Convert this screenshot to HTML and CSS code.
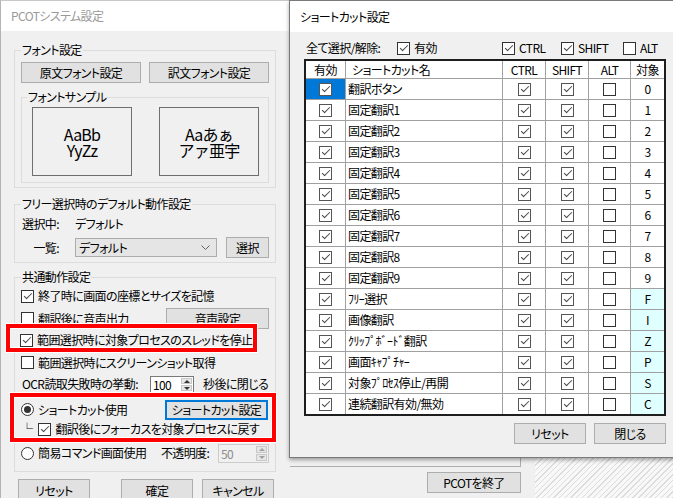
FILE: index.html
```html
<!DOCTYPE html>
<html lang="ja">
<head>
    <meta charset="UTF-8">
    <meta name="viewport" content="width=device-width, initial-scale=1.0">
    <title>PCOTシステム設定</title>
    <link rel="stylesheet" href="styles.css">
</head>

<body>
<div class="desktop">

    <!-- メイン画面（背面） -->
    <div class="win win-main">
        <div class="main-panel"></div>
        <div class="main-foot">
            <button class="btn btn-quit">PCOTを終了</button>
        </div>
    </div>

    <!-- システム設定 -->
    <div class="win win-sys">
        <div class="titlebar">PCOTシステム設定</div>
        <div class="sys-body">
            <fieldset class="group">
                <legend>フォント設定</legend>
                <div class="font-btns">
                    <button class="btn">原文フォント設定</button>
                    <button class="btn">訳文フォント設定</button>
                </div>
                <fieldset class="group group-sample">
                    <legend>フォントサンプル</legend>
                    <div class="samples">
                        <div class="sample">AaBb<br>YyZz</div>
                        <div class="sample">Aaあぁ<br>アァ亜宇</div>
                    </div>
                </fieldset>
            </fieldset>

            <fieldset class="group group-free">
                <legend>フリー選択時のデフォルト動作設定</legend>
                <div class="free-grid">
                    <span class="lbl">選択中:</span>
                    <span>デフォルト</span>
                    <span></span>
                    <span class="lbl">一覧:</span>
                    <div class="combo">
                        <span>デフォルト</span>
                        <svg width="9" height="5" viewBox="0 0 9 5"><polyline points="0.5,0.5 4.5,4.5 8.5,0.5" fill="none" stroke="#606060" stroke-width="1"/></svg>
                    </div>
                    <button class="btn">選択</button>
                </div>
            </fieldset>

            <fieldset class="group group-common">
                <legend>共通動作設定</legend>
                <div class="opt row-a"><span class="chk on"></span>終了時に画面の座標とサイズを記憶</div>
                <div class="opt row-b"><span class="chk"></span>翻訳後に音声出力<button class="btn btn-right">音声設定</button></div>
                <div class="mark mark-thread">
                    <div class="opt"><span class="chk on"></span>範囲選択時に対象プロセスのスレッドを停止</div>
                </div>
                <div class="opt row-d"><span class="chk"></span>範囲選択時にスクリーンショット取得</div>
                <div class="opt row-e">
                    <span class="ocr-lbl">OCR読取失敗時の挙動:</span>
                    <span class="spin"><span class="spin-val">100</span><span class="spin-arrows"><i class="up"></i><i class="down"></i></span></span>
                    <span class="ocr-unit">秒後に閉じる</span>
                </div>
                <div class="mark mark-shortcut">
                    <div class="opt row-f"><span class="radio on"></span>ショートカット使用<button class="btn btn-right btn-focus">ショートカット設定</button></div>
                    <div class="opt row-g"><span class="branch">└</span><span class="chk on"></span>翻訳後にフォーカスを対象プロセスに戻す</div>
                </div>
                <div class="opt row-h">
                    <span class="radio"></span>
                    <span class="cmd-lbl">簡易コマンド画面使用</span>
                    <span class="opacity-lbl">不透明度:</span>
                    <span class="spin spin-off"><span class="spin-val">50</span><span class="spin-arrows"><i class="up"></i><i class="down"></i></span></span>
                </div>
            </fieldset>

            <div class="sys-foot">
                <button class="btn">リセット</button>
                <button class="btn btn-ok">確定</button>
                <button class="btn btn-cancel">キャンセル</button>
            </div>
        </div>
    </div>

    <!-- ショートカット設定 -->
    <div class="win win-keys">
        <div class="titlebar">ショートカット設定</div>
        <div class="keys-body">
            <div class="select-all">
                <span>全て選択/解除:</span>
                <span class="opt"><span class="chk on"></span>有効</span>
                <span class="opt"><span class="chk on"></span>CTRL</span>
                <span class="opt"><span class="chk on"></span>SHIFT</span>
                <span class="opt"><span class="chk"></span>ALT</span>
            </div>

            <div class="keys-grid">
                <div class="hd">有効</div><div class="hd hd-name">ショートカット名</div><div class="hd">CTRL</div><div class="hd">SHIFT</div><div class="hd">ALT</div><div class="hd">対象</div>

                <div class="sel"><span class="chk on"></span></div><div class="name">翻訳ボタン</div><div><span class="chk on"></span></div><div><span class="chk on"></span></div><div><span class="chk"></span></div><div>0</div>
                <div><span class="chk on"></span></div><div class="name">固定翻訳1</div><div><span class="chk on"></span></div><div><span class="chk on"></span></div><div><span class="chk"></span></div><div>1</div>
                <div><span class="chk on"></span></div><div class="name">固定翻訳2</div><div><span class="chk on"></span></div><div><span class="chk on"></span></div><div><span class="chk"></span></div><div>2</div>
                <div><span class="chk on"></span></div><div class="name">固定翻訳3</div><div><span class="chk on"></span></div><div><span class="chk on"></span></div><div><span class="chk"></span></div><div>3</div>
                <div><span class="chk on"></span></div><div class="name">固定翻訳4</div><div><span class="chk on"></span></div><div><span class="chk on"></span></div><div><span class="chk"></span></div><div>4</div>
                <div><span class="chk on"></span></div><div class="name">固定翻訳5</div><div><span class="chk on"></span></div><div><span class="chk on"></span></div><div><span class="chk"></span></div><div>5</div>
                <div><span class="chk on"></span></div><div class="name">固定翻訳6</div><div><span class="chk on"></span></div><div><span class="chk on"></span></div><div><span class="chk"></span></div><div>6</div>
                <div><span class="chk on"></span></div><div class="name">固定翻訳7</div><div><span class="chk on"></span></div><div><span class="chk on"></span></div><div><span class="chk"></span></div><div>7</div>
                <div><span class="chk on"></span></div><div class="name">固定翻訳8</div><div><span class="chk on"></span></div><div><span class="chk on"></span></div><div><span class="chk"></span></div><div>8</div>
                <div><span class="chk on"></span></div><div class="name">固定翻訳9</div><div><span class="chk on"></span></div><div><span class="chk on"></span></div><div><span class="chk"></span></div><div>9</div>
                <div><span class="chk on"></span></div><div class="name">ﾌﾘｰ選択</div><div><span class="chk on"></span></div><div><span class="chk on"></span></div><div><span class="chk"></span></div><div class="key">F</div>
                <div><span class="chk on"></span></div><div class="name">画像翻訳</div><div><span class="chk on"></span></div><div><span class="chk on"></span></div><div><span class="chk"></span></div><div class="key">I</div>
                <div><span class="chk on"></span></div><div class="name">ｸﾘｯﾌﾟﾎﾞｰﾄﾞ翻訳</div><div><span class="chk on"></span></div><div><span class="chk on"></span></div><div><span class="chk"></span></div><div class="key">Z</div>
                <div><span class="chk on"></span></div><div class="name">画面ｷｬﾌﾟﾁｬｰ</div><div><span class="chk on"></span></div><div><span class="chk on"></span></div><div><span class="chk"></span></div><div class="key">P</div>
                <div><span class="chk on"></span></div><div class="name">対象ﾌﾟﾛｾｽ停止/再開</div><div><span class="chk on"></span></div><div><span class="chk on"></span></div><div><span class="chk"></span></div><div class="key">S</div>
                <div><span class="chk on"></span></div><div class="name">連続翻訳有効/無効</div><div><span class="chk on"></span></div><div><span class="chk on"></span></div><div><span class="chk"></span></div><div class="key">C</div>
            </div>

            <div class="keys-foot">
                <button class="btn">リセット</button>
                <button class="btn">閉じる</button>
            </div>
        </div>
    </div>

</div>
</body>
</html>
```

FILE: styles.css
```css
* {
    box-sizing: border-box;
}

body {
    margin: 0;
    font-family: "Noto Sans CJK JP", "Noto Sans", sans-serif;
    font-size: 12px;
    line-height: 16px;
    letter-spacing: -0.6px;
    font-feature-settings: "palt";
    white-space: nowrap;
    color: #000;
}

.desktop {
    position: relative;
    width: 673px;
    height: 498px;
    overflow: hidden;
    background: repeating-linear-gradient(135deg, #f8f8f8 0 3px, #dcdcdc 3px 4px);
}

/* ---- windows ---- */

.win {
    position: absolute;
    top: 0;
    display: flex;
    flex-direction: column;
    background: #f0f0f0;
}

.win-main {
    left: 250px;
    width: 285px;
    height: 498px;
}

.win-sys {
    left: 0;
    width: 290px;
    height: 520px;
    border-left: 1px solid #b4b4b4;
    border-top: 1px solid #c8c8c8;
}

.win-keys {
    left: 289px;
    width: 392px;
    height: 458px;
    border: 1px solid #7a7a7a;
    box-shadow: 0 2px 4px rgba(0, 0, 0, 0.35);
}

.titlebar {
    flex: none;
    display: flex;
    align-items: center;
    height: 31px;
    padding: 1px 0 0 10px;
    background: #fff;
}

.win-sys .titlebar {
    height: 30px;
    padding-top: 0;
    color: #999;
}

/* ---- controls ---- */

.btn {
    font: inherit;
    letter-spacing: inherit;
    line-height: 16px;
    height: 21px;
    padding: 0;
    color: #000;
    background: #e1e1e1;
    border: 1px solid #adadad;
}

.btn-focus {
    border: 2px solid #0078d7;
}

.chk {
    position: relative;
    flex: none;
    display: inline-block;
    width: 13px;
    height: 13px;
    background: #fff;
    border: 1px solid #333;
}

.chk.on::after {
    content: "";
    position: absolute;
    left: 4px;
    top: 0;
    width: 3px;
    height: 7px;
    border: solid #444;
    border-width: 0 1px 1px 0;
    transform: rotate(45deg);
}

.radio {
    position: relative;
    flex: none;
    width: 13px;
    height: 13px;
    background: #fff;
    border: 1px solid #333;
    border-radius: 50%;
}

.radio.on::after {
    content: "";
    position: absolute;
    left: 2px;
    top: 2px;
    width: 7px;
    height: 7px;
    border-radius: 50%;
    background: #333;
}

.opt {
    display: flex;
    align-items: center;
    gap: 4px;
}

.spin {
    display: flex;
    flex: none;
    width: 44px;
    height: 17px;
    background: #fff;
    border: 1px solid #7a7a7a;
}

.spin-val {
    flex: 1;
    padding-left: 2px;
    line-height: 15px;
}

.spin-arrows {
    display: flex;
    flex-direction: column;
    gap: 1px;
    width: 13px;
    padding: 1px;
}

.spin-arrows i {
    position: relative;
    flex: 1;
    background: #e6e6e6;
    border: 1px solid #c8c8c8;
}

.spin-arrows i::after {
    content: "";
    position: absolute;
    left: 2px;
    top: 1px;
    border-left: 3px solid transparent;
    border-right: 3px solid transparent;
}

.spin-arrows .up::after {
    border-bottom: 3px solid #333;
}

.spin-arrows .down::after {
    border-top: 3px solid #333;
}

.spin-off {
    width: 51px;
    height: 19px;
    background: #f0f0f0;
    border-color: #cccccc;
    color: #8c8c8c;
}

.spin-off .spin-val {
    line-height: 17px;
}

.spin-off .spin-arrows i::after {
    border-bottom-color: #a0a0a0;
    border-top-color: #a0a0a0;
}

/* ---- システム設定 ---- */

.sys-body {
    padding: 11px 14px 0 13px;
}

.group {
    margin: 0;
    min-width: 0;
    padding: 0 6px 4px;
    border: 1px solid #dcdcdc;
}

.group legend {
    padding: 0 1px;
}

.font-btns {
    display: flex;
    gap: 8px;
    margin-top: 4px;
}

.font-btns .btn {
    width: 120px;
}

.group-sample {
    margin-top: 6px;
    padding: 0 9px 6px 10px;
}

.group-sample legend {
    margin-left: -5px;
}

.samples {
    display: flex;
    gap: 27px;
    margin-top: 2px;
}

.sample {
    display: flex;
    align-items: center;
    justify-content: center;
    width: 100px;
    height: 69px;
    border: 1px solid #6e6e6e;
    font-size: 16px;
    line-height: 16px;
    letter-spacing: -0.8px;
    font-feature-settings: normal;
    text-align: center;
}

.group-free {
    margin-top: 8px;
}

.free-grid {
    display: grid;
    grid-template-columns: 54px 151px 43px;
    grid-template-rows: 16px 21px;
    row-gap: 5px;
    align-items: center;
    margin-top: 4px;
}

.free-grid .lbl {
    justify-self: end;
    margin-right: 16px;
}

.free-grid .btn {
    height: 21px;
}

.combo {
    display: flex;
    align-items: center;
    justify-content: space-between;
    width: 142px;
    height: 19px;
    padding: 0 6px 0 3px;
    background: #e5e5e5;
    border: 1px solid #acacac;
}

.group-common {
    margin-top: 6px;
    padding-bottom: 7px;
}

.row-a { height: 22px; }
.row-b { height: 23px; }
.row-d { height: 21px; }
.row-e { height: 22px; gap: 0; }
.row-f { height: 21px; }
.row-g { height: 18px; }
.row-h { height: 22px; }

.btn-right {
    width: 103px;
    margin-left: auto;
}

.row-f .btn-right {
    height: 20px;
    margin-right: 1px;
}

.ocr-lbl {
    width: 129px;
    padding-left: 1px;
}

.ocr-unit {
    margin-left: 9px;
}

.cmd-lbl {
    width: 121px;
}

.opacity-lbl {
    width: 54px;
}

.branch {
    margin-right: 2px;
    font-feature-settings: normal;
}

/* 注目枠 */
.mark {
    position: relative;
    z-index: 1;
    background: #f0f0f0;
    border: 4px solid #ff0000;
    box-shadow: 0 0 0 1px #fff, inset 0 0 0 1px #fff;
}

.mark-thread {
    margin: -6px 12px 0 -15px;
    padding: 4px 0 0 10px;
}

.mark-thread .opt {
    height: 16px;
}

.mark-shortcut {
    margin: -2px -7px 0 -11px;
    padding: 2px 3px 0 7px;
}

.sys-foot {
    display: flex;
    margin-top: 7px;
    padding-left: 4px;
}

.sys-foot .btn {
    width: 72px;
    height: 23px;
}

.sys-foot .btn-ok {
    margin-left: 31px;
}

.sys-foot .btn-cancel {
    margin-left: 9px;
}

/* ---- ショートカット設定 ---- */

.keys-body {
    padding: 8px 0 0 14px;
}

.select-all {
    display: grid;
    grid-template-columns: 91px 105px 59px 62px auto;
    align-items: center;
    height: 16px;
    padding-left: 2px;
}

.keys-grid {
    display: grid;
    grid-template-columns: 40px 157px 43px 43px 42px 33px;
    width: 362px;
    margin-top: 3px;
    background: #fff;
    border: 2px solid #1e1e1e;
}

.keys-grid > div {
    display: flex;
    align-items: center;
    justify-content: center;
    height: 21px;
    border-right: 1px solid #a0a0a0;
    border-bottom: 1px solid #a0a0a0;
}

.keys-grid > div:nth-child(6n) {
    border-right: none;
}

.keys-grid > div:nth-last-child(-n+6) {
    height: 20px;
    border-bottom: none;
}

.keys-grid > .hd {
    height: 18px;
}

.keys-grid > .hd-name,
.keys-grid > .name {
    justify-content: flex-start;
}

.keys-grid > .hd-name {
    padding-left: 6px;
}

.keys-grid > .name {
    padding-left: 2px;
}

.keys-grid > .sel {
    background: #0078d7;
}

.keys-grid > .key {
    background: #e0ffff;
}

.keys-grid .chk.on {
    border-color: #555;
}

.keys-foot {
    display: flex;
    justify-content: flex-end;
    gap: 8px;
    width: 362px;
    margin-top: 7px;
}

.keys-foot .btn {
    width: 72px;
}

/* ---- メイン画面 ---- */

.main-panel {
    height: 467px;
    margin-right: 14px;
    border-right: 1px solid #adadad;
    border-bottom: 1px solid #adadad;
}

.main-foot {
    display: flex;
    justify-content: flex-end;
    padding: 5px 14px 0 0;
}

.btn-quit {
    width: 94px;
}
```
